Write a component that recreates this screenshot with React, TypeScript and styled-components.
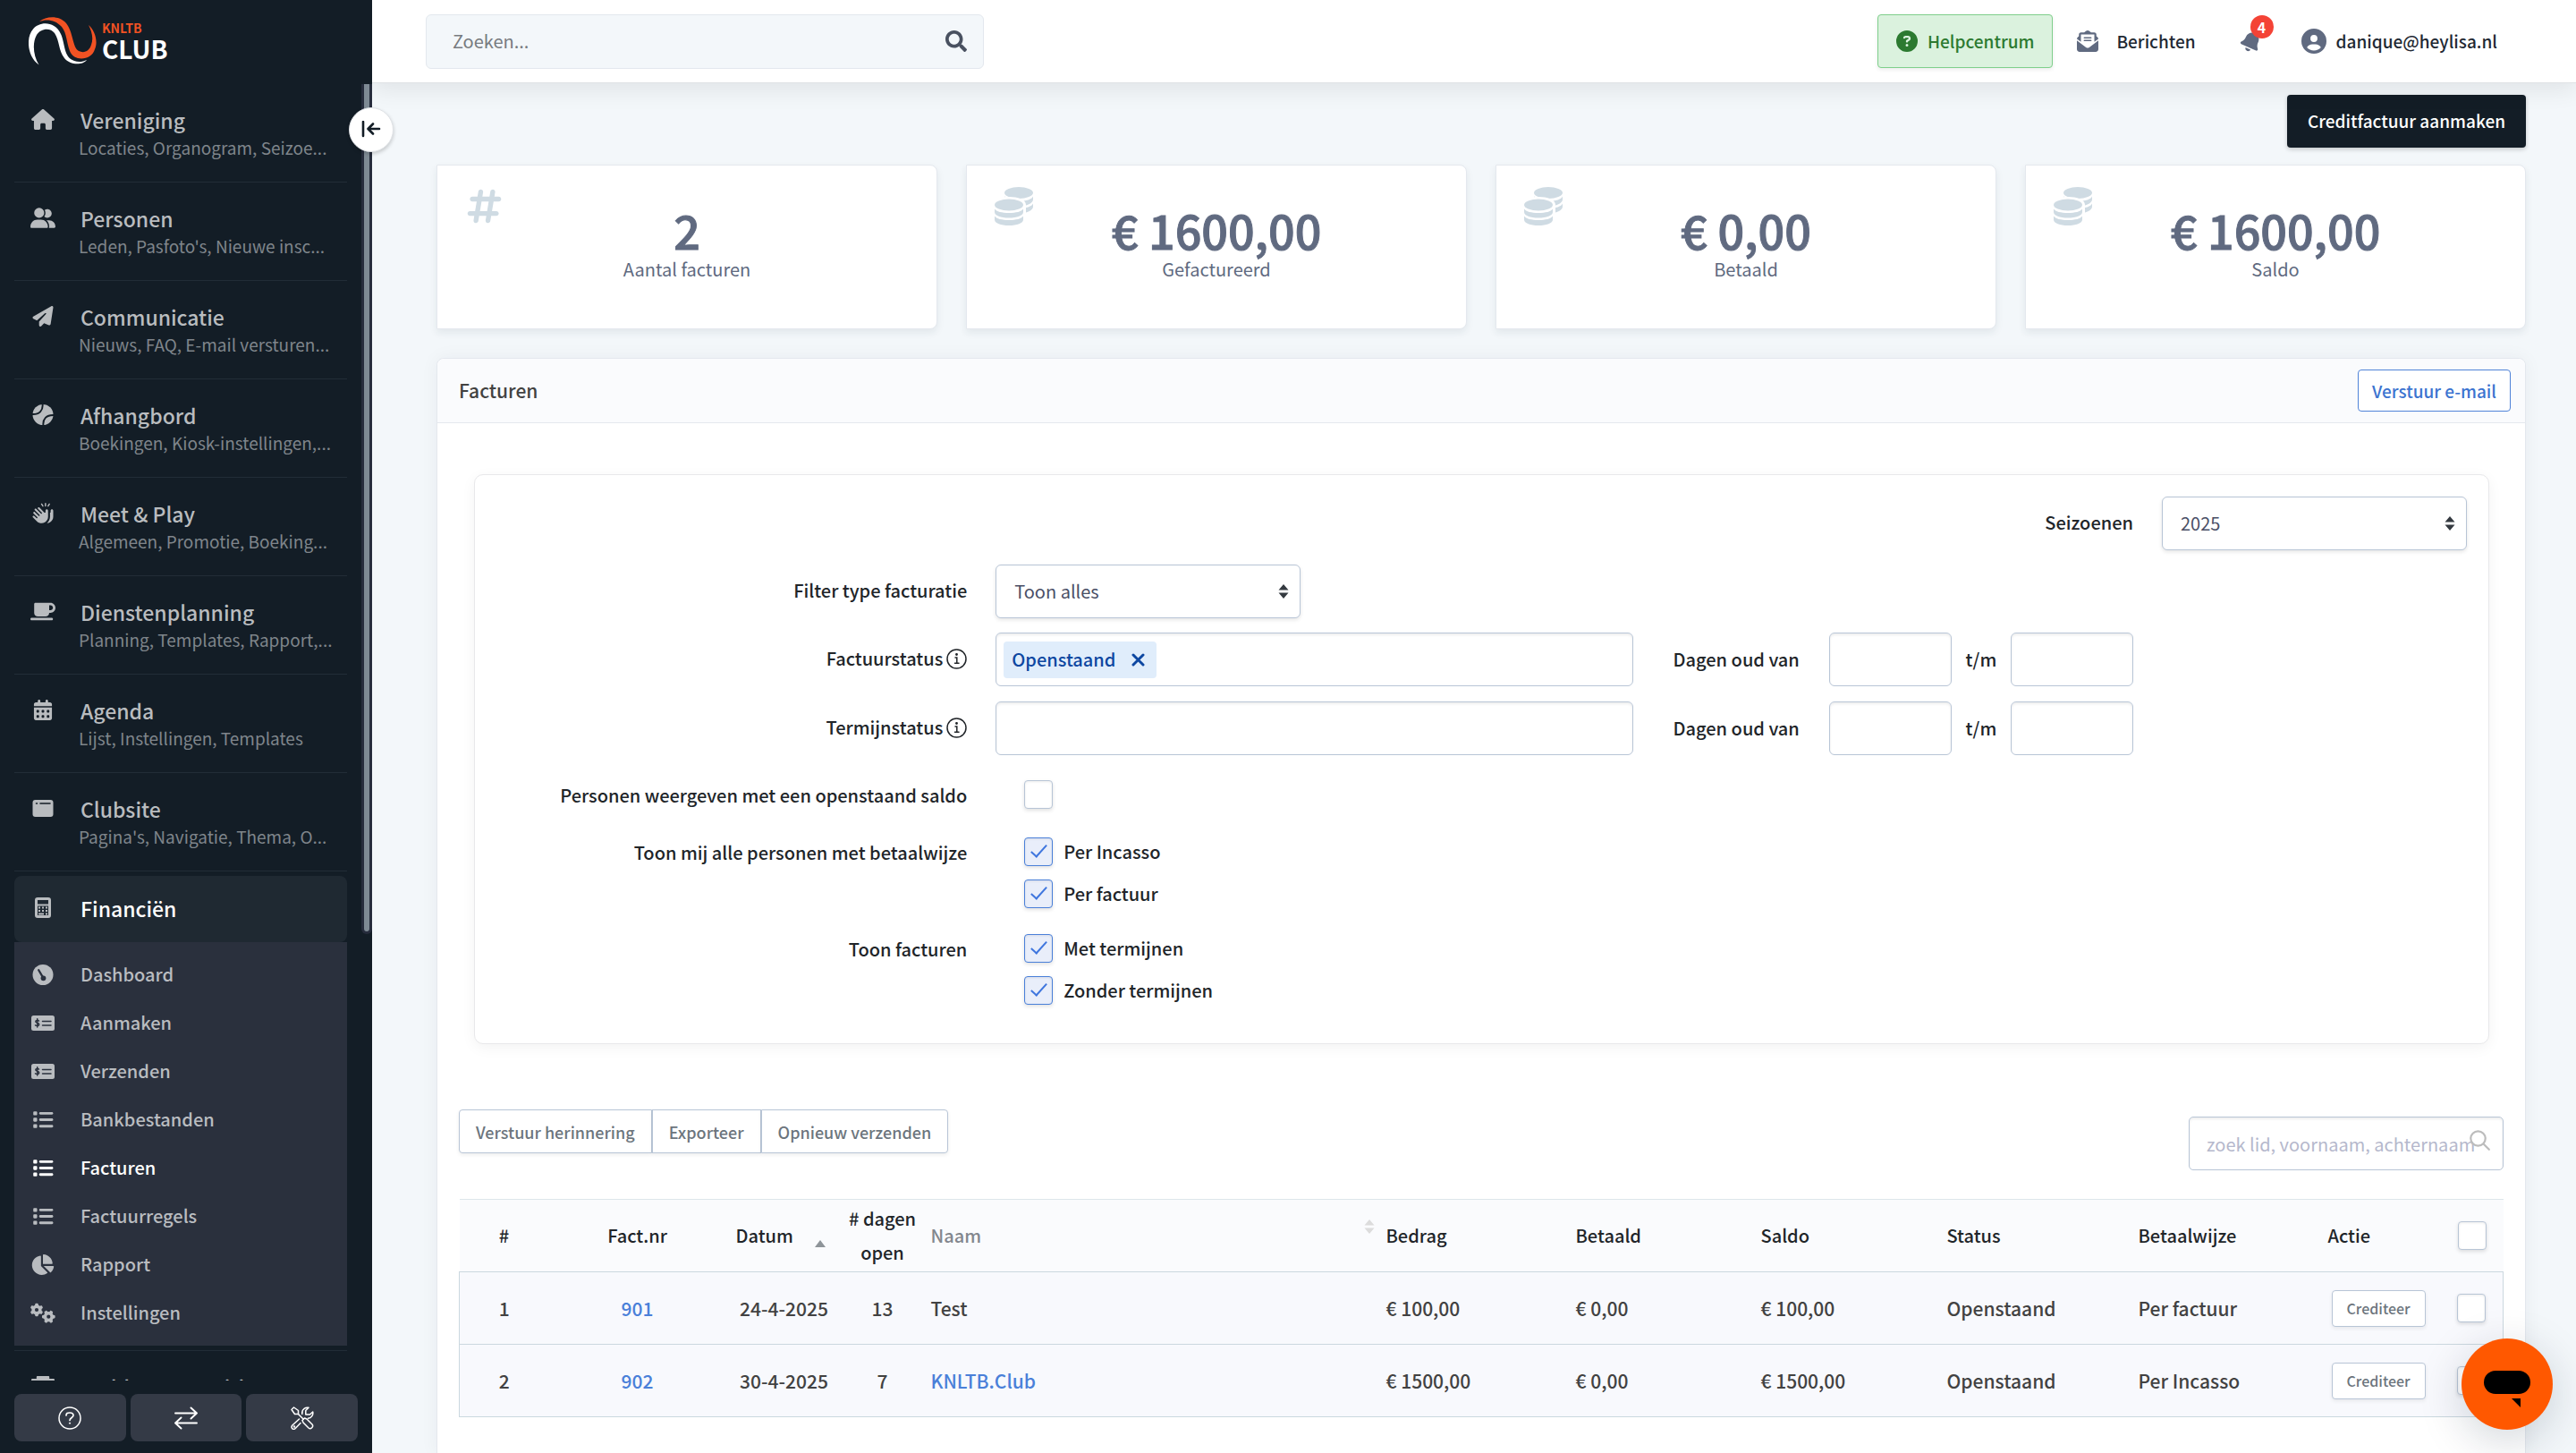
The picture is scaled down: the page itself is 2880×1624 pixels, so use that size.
import React from "react";
import styled, { createGlobalStyle, css } from "styled-components";
import {
  FaHouse,
  FaUserGroup,
  FaPaperPlane,
  FaHandsClapping,
  FaMugSaucer,
  FaCalendarDays,
  FaGears,
  FaList,
  FaCircleQuestion,
  FaEnvelopeOpenText,
  FaBell,
  FaCircleUser,
  FaHashtag,
} from "react-icons/fa6";
import { FaChartPie, FaSearch, FaTrophy } from "react-icons/fa";

/* ---------- theme ---------- */

const color = {
  navy: "#131d26",
  navyRaised: "#1f2932",
  navyLine: "#222d37",
  submenu: "#2a303d",
  page: "#f3f7fa",
  border: "#e4e8ee",
  field: "#b8c5d6",
  ink: "#212529",
  text: "#424242",
  slate: "#606a80",
  blue: "#4a80d9",
};

const semi = 500;

const GlobalStyle = createGlobalStyle`
  *, *::before, *::after { box-sizing: border-box; }
  html, body, #root { height: 100%; }
  body {
    margin: 0;
    overflow: hidden;
    background: ${color.page};
    color: ${color.ink};
    font-family: "Noto Sans CJK JP", "Noto Sans", sans-serif;
    font-size: 20px;
    line-height: 32px;
  }
  button, input, select { font: inherit; color: inherit; margin: 0; }
  button { cursor: pointer; }
  a { color: inherit; text-decoration: none; }
`;

/* ---------- custom drawings ---------- */

const Logo = () => (
  <svg width="76" height="54" viewBox="0 0 76 54" fill="none">
    <path
      d="M11.5 53.5C-2 44 -3 22 5 13.5C12 5 29 4 36 19C41 30 39 45 51 49C56 51 61 50 65 48C61 54 46 54 40 46C33 37 35 27 29 18C24 11 13 13 9 20C4 29 5 43 11.5 53.5Z"
      fill="#fff"
    />
    <path
      d="M12 5C20 -1 34 -2 42 7C50 17 49 34 56 38C62 41 68 38 70 31C73 23 70 15 67 9C74 15 78 27 74 36C71 48 51 51 46 38C42 27 43 19 37 11C30 3 20 2 12 5Z"
      fill="#f15223"
    />
  </svg>
);

const TennisIcon = () => (
  <svg viewBox="0 0 24 24">
    <circle cx="12" cy="12" r="12" fill="currentColor" />
    <path
      d="M11.500 -1C12.500 7 8 12 -1 11.500M25 12.500C16 12 11.500 17 12.500 25"
      fill="none"
      stroke={color.navy}
      strokeWidth="2"
    />
  </svg>
);

const BrowserIcon = () => (
  <svg viewBox="-2.500 -2 28 23">
    <rect width="23" height="19" rx="3" fill="currentColor" />
    <path d="M4 4h1M8.500 4h11" stroke={color.navy} strokeWidth="1.600" strokeLinecap="round" />
  </svg>
);

const CalcIcon = () => (
  <svg viewBox="0 0 18 23">
    <rect x="1.500" y="1.500" width="15" height="20" rx="1.500" fill="none" stroke="currentColor" strokeWidth="3" />
    <path d="M2 8.500h14" stroke="currentColor" strokeWidth="2" />
    <g fill="currentColor">
      <rect x="4" y="10.500" width="2" height="2" />
      <rect x="8" y="10.500" width="2" height="2" />
      <rect x="12" y="10.500" width="2" height="2" />
      <rect x="4" y="14" width="2" height="2" />
      <rect x="8" y="14" width="2" height="2" />
      <rect x="12" y="14" width="2" height="2" />
      <rect x="4" y="17.500" width="6" height="2" />
      <rect x="12" y="17.500" width="2" height="2" />
    </g>
  </svg>
);

const GaugeIcon = () => (
  <svg viewBox="0 0 24 24">
    <circle cx="12" cy="12" r="12" fill="currentColor" />
    <path d="M7 6.500L12 15" stroke={color.submenu} strokeWidth="2.400" strokeLinecap="round" />
    <circle cx="12.500" cy="16" r="3" fill={color.submenu} />
  </svg>
);

const MoneyIcon = () => (
  <svg viewBox="-1 -3 28 23">
    <rect width="26" height="17" rx="2.500" fill="currentColor" />
    <g stroke={color.submenu} fill="none" strokeLinecap="round">
      <path d="M8.500 6C7 5 4.800 5.200 4.800 6.700C4.800 8.600 8.700 8 8.700 10C8.700 11.600 6.200 11.900 4.500 10.800M6.700 3.800V13" strokeWidth="1.500" />
      <path d="M12.500 6.500h9.500M12.500 11h9.500" strokeWidth="1.500" />
    </g>
  </svg>
);

const CoinsIcon = () => (
  <svg width="43" height="43" viewBox="0 0 43 43">
    <g fill="currentColor">
      <ellipse cx="27" cy="6.500" rx="16" ry="6.500" />
      <path d="M11 10C12 13.500 19 16 27 16S42 13.500 43 10.500V14C43 18 36 21.500 27 21.500S11 18 11 14Z" />
      <path d="M11 18C12 21.500 19 24 27 24S42 21.500 43 18.500V22C43 26 36 29.500 27 29.500S11 26 11 22Z" />
    </g>
    <path d="M-2 20C-2 14 6 11 16 11S35 14 35 20V45H-2Z" fill="#fff" />
    <g fill="currentColor">
      <ellipse cx="16" cy="20" rx="16" ry="6.500" />
      <path d="M0 24.500C2 27.500 8 29 16 29S30 27.500 32 24.500V28C32 32 25 34.500 16 34.500S0 32 0 28Z" />
      <path d="M0 32.500C2 35.500 8 37 16 37S30 35.500 32 32.500V36.500C32 40.500 25 43 16 43S0 40.500 0 36.500Z" />
    </g>
  </svg>
);

const HelpIcon = () => (
  <svg width="26" height="26" viewBox="0 0 26 26" fill="none" stroke="#fff" strokeLinecap="round">
    <circle cx="13" cy="13" r="12" strokeWidth="1.500" />
    <path d="M9 10C9 7.500 10.500 7 13 7C15.500 7 17 8 17 10C17 12.500 13 12.500 13 15.500" strokeWidth="1.700" />
    <circle cx="13" cy="18.700" r="0.600" fill="#fff" />
  </svg>
);

const SwapIcon = () => (
  <svg width="26" height="26" viewBox="0 0 26 26" fill="none" stroke="#fff" strokeWidth="1.900" strokeLinecap="round" strokeLinejoin="round">
    <path d="M1 7.500h24M18.500 1.500l6.500 6l-6.500 6" />
    <path d="M25 18.500H1M7.500 12.500l-6.500 6l6.500 6" />
  </svg>
);

const ToolsIcon = () => (
  <svg width="26" height="26" viewBox="0 0 26 26" fill="none" stroke="#fff" strokeWidth="1.500" strokeLinecap="round" strokeLinejoin="round">
    <path d="M1 3.500L3.500 1L8.500 4.500V8.500H4.500Z" />
    <path d="M8.500 8.500L14 14" />
    <path d="M13 15.500L15.500 13L18 14L24 20C26 22.500 22.500 26 20 24L14 18Z" />
    <path d="M12.800 6.500C13 3 16.500 0.500 20 1.300L16.800 4.500V9H21.500L24.700 6C25.500 9.500 23 13 19.500 13.200" />
    <path d="M12.800 6.500V8.500M9.500 14L1.900 21C-0.500 24 3 27 5.200 24.500L11 18.500" />
    <circle cx="4" cy="22.500" r="0.500" />
  </svg>
);

const CollapseIcon = () => (
  <svg width="22" height="20" viewBox="0 0 22 20" fill="none" stroke={color.navy} strokeWidth="2.600" strokeLinecap="round" strokeLinejoin="round">
    <path d="M2 1v16M20 9H8M13 3.500L7.500 9L13 14.500" />
  </svg>
);

const InfoIcon = () => (
  <svg width="23" height="23" viewBox="0 0 23 23" fill="none" stroke={color.ink} strokeWidth="1.500" strokeLinecap="round">
    <circle cx="11.500" cy="11.500" r="10.500" />
    <path d="M10 10h1.800v6M9.500 16.200h4.500" />
    <circle cx="11.500" cy="6.500" r="0.700" fill={color.ink} />
  </svg>
);

const CrossIcon = () => (
  <svg width="15" height="15" viewBox="0 0 15 15" fill="none" stroke="currentColor" strokeWidth="3" strokeLinecap="round">
    <path d="M2 2l11 11M13 2L2 13" />
  </svg>
);

const CaretsIcon = () => (
  <svg width="12" height="16" viewBox="0 0 12 16" fill="currentColor">
    <path d="M6 0l5.500 6.500h-11zM6 16l5.500-6.500h-11z" />
  </svg>
);

const SortUpIcon = () => (
  <svg width="12" height="8" viewBox="0 0 12 8" fill="#8e9499">
    <path d="M6 0l6 8H0z" />
  </svg>
);

const SearchThinIcon = () => (
  <svg width="23" height="23" viewBox="0 0 23 23" fill="none" stroke="#bcbcbc" strokeWidth="2.200" strokeLinecap="round">
    <circle cx="9.500" cy="9.500" r="8.200" />
    <path d="M15.500 15.500l6.300 6.300" />
  </svg>
);

const ChatIcon = () => (
  <svg width="52" height="42" viewBox="0 0 52 42">
    <rect width="52" height="26" rx="13" fill="#000" />
    <path d="M31 31h10v10z" fill="#000" />
  </svg>
);

/* ---------- shell ---------- */

const Shell = styled.div`
  display: grid;
  grid-template-columns: 416px minmax(0, 1fr);
  height: 100vh;
`;

const Sidebar = styled.aside`
  position: relative;
  z-index: 3;
  display: flex;
  flex-direction: column;
  min-height: 0;
  background: ${color.navy};
`;

const Brand = styled.a`
  display: flex;
  align-items: center;
  gap: 6px;
  height: 94px;
  padding: 0 32px 3px;
  flex: none;
`;

const BrandText = styled.span`
  display: flex;
  flex-direction: column;
  color: #fff;
  font-weight: 700;
  font-size: 28px;
  line-height: 30px;
`;

const BrandTop = styled.span`
  color: #f15223;
  font-size: 14px;
  line-height: 16px;
`;

const NavScroll = styled.nav`
  flex: 1;
  min-height: 0;
  overflow: hidden;
  padding: 0 28px 0 16px;
`;

const ScrollThumb = styled.div`
  position: absolute;
  top: 94px;
  right: 0;
  width: 12px;
  height: 950px;
  border: 3px solid #262c3c;
  border-top: 0;
  border-radius: 0 0 6px 6px;
  background: #7e8a94;
`;

const CollapseButton = styled.button`
  position: absolute;
  top: 120px;
  right: -24px;
  display: grid;
  place-items: center;
  width: 50px;
  height: 50px;
  padding: 0;
  border: 1px solid #dfe2e6;
  border-radius: 50%;
  background: #fff;
  box-shadow: 0 2px 4px rgba(0, 0, 0, 0.2);
`;

const NavItem = styled.a<{ $active?: boolean }>`
  display: grid;
  grid-template-columns: 32px minmax(0, 1fr);
  column-gap: 24px;
  align-content: center;
  padding: 0 8px 0 16px;
  color: #b9bcbf;
  ${(p) =>
    p.$active
      ? css`
          height: 74px;
          margin-top: 5px;
          padding-bottom: 3px;
          border-radius: 8px;
          background: ${color.navyRaised};
        `
      : css`
          height: 110px;
          border-bottom: 1px solid ${color.navyLine};
        `}
`;

const NavIcon = styled.span`
  display: grid;
  place-items: center;
  svg {
    display: block;
    width: 28px;
    height: 23px;
  }
`;

const NavTitle = styled.span<{ $active?: boolean }>`
  padding-left: 2px;
  font-size: 23px;
  line-height: 32px;
  font-weight: ${semi};
  color: ${(p) => (p.$active ? "#fff" : "#b9bcbf")};
`;

const NavHint = styled.span`
  grid-column: 2;
  white-space: nowrap;
  font-size: 19px;
  line-height: 30px;
  color: #7f858b;
`;

const SubMenu = styled.div`
  padding: 9px 0 10px;
  background: ${color.submenu};
`;

const SubItem = styled.a<{ $active?: boolean }>`
  display: grid;
  grid-template-columns: 32px minmax(0, 1fr);
  column-gap: 26px;
  align-items: center;
  height: 54px;
  padding: 0 16px;
  font-size: 20px;
  font-weight: ${semi};
  color: ${(p) => (p.$active ? "#fff" : "#b9bcc0")};
`;

const NavRule = styled.hr`
  margin: 5px 0 0;
  border: 0;
  border-top: 1px solid ${color.navyLine};
`;

const SideFooter = styled.div`
  flex: none;
  display: flex;
  gap: 5px;
  padding: 15px 16px 13px;
  background: ${color.navy};
`;

const SideButton = styled.button`
  flex: 1;
  display: grid;
  place-items: center;
  height: 53px;
  padding: 0;
  border: 0;
  border-radius: 8px;
  background: #343a46;
`;

const Main = styled.div`
  display: flex;
  flex-direction: column;
  min-width: 0;
  min-height: 0;
`;

/* ---------- top bar ---------- */

const TopBar = styled.header`
  position: relative;
  z-index: 2;
  flex: none;
  display: flex;
  align-items: center;
  justify-content: space-between;
  height: 93px;
  padding: 0 88px 0 60px;
  border-bottom: 1px solid #dfe2e5;
  background: #fff;
  box-shadow: 0 8px 24px rgba(0, 0, 0, 0.08);
`;

const SearchBox = styled.label`
  display: flex;
  align-items: center;
  width: 624px;
  height: 61px;
  padding: 0 18px 0 29px;
  border: 1px solid #e3e8ee;
  border-radius: 6px;
  background: ${color.page};
  color: #495160;
`;

const SearchInput = styled.input`
  flex: 1;
  min-width: 0;
  padding: 0;
  border: 0;
  outline: 0;
  background: transparent;
  font-size: 20px;
  &::placeholder {
    color: #777b80;
    opacity: 1;
  }
`;

const TopActions = styled.div`
  display: flex;
  align-items: center;
`;

const HelpButton = styled.button`
  display: flex;
  align-items: center;
  gap: 11px;
  height: 60px;
  margin-right: 27px;
  padding: 0 20px;
  border: 1px solid #7fcf8b;
  border-radius: 4px;
  background: #dbf2de;
  box-shadow: 0 2px 4px rgba(0, 0, 0, 0.08);
  color: #2c7a30;
  font-size: 19px;
  font-weight: ${semi};
`;

const TopLink = styled.a<{ $gap: number; $after: number }>`
  position: relative;
  display: flex;
  align-items: center;
  gap: ${(p) => p.$gap}px;
  margin-right: ${(p) => p.$after}px;
  font-size: 19px;
  font-weight: ${semi};
  color: #1f2933;
  svg {
    color: ${color.slate};
  }
`;

const TiltedBell = styled(FaBell)`
  transform: rotate(24deg);
`;

const Badge = styled.span`
  position: absolute;
  top: -17px;
  right: -13px;
  display: grid;
  place-items: center;
  width: 26px;
  height: 26px;
  border-radius: 50%;
  background: #f44336;
  color: #fff;
  font-size: 16px;
  line-height: 26px;
  font-weight: 700;
`;

/* ---------- page ---------- */

const Page = styled.main`
  flex: 1;
  min-height: 0;
  display: flex;
  flex-direction: column;
  padding: 13px 56px 0 72px;
`;

const PrimaryButton = styled.button`
  align-self: flex-end;
  height: 59px;
  flex: none;
  padding: 0 23px 2px;
  border: 0;
  border-radius: 4px;
  background: ${color.navy};
  box-shadow: 0 2px 5px rgba(0, 0, 0, 0.2);
  color: #fff;
  font-size: 19px;
  font-weight: ${semi};
`;

const Stats = styled.section`
  display: grid;
  grid-template-columns: repeat(4, minmax(0, 1fr));
  gap: 32px;
  flex: none;
  margin-top: 19px;
`;

const StatCard = styled.article`
  position: relative;
  display: flex;
  flex-direction: column;
  align-items: center;
  height: 184px;
  padding-top: 42px;
  border: 1px solid ${color.border};
  border-radius: 0 8px 8px 0;
  background: #fff;
  box-shadow: 0 4px 8px rgba(30, 45, 60, 0.08);
  color: ${color.slate};
`;

const StatIcon = styled.span`
  position: absolute;
  top: 24px;
  left: 31px;
  color: #cfdbe3;
  svg {
    display: block;
  }
`;

const StatValue = styled.strong`
  font-size: 52px;
  line-height: 60px;
  font-weight: ${semi};
  -webkit-text-stroke: 1px currentColor;
`;

const StatLabel = styled.span`
  font-size: 20px;
  line-height: 28px;
`;

const Panel = styled.section`
  flex: 1 0 auto;
  margin-top: 32px;
  border: 1px solid ${color.border};
  border-radius: 8px 8px 0 0;
  background: #fff;
  box-shadow: 0 0 20px rgba(30, 45, 60, 0.05);
`;

const PanelHead = styled.header`
  display: flex;
  align-items: center;
  justify-content: space-between;
  height: 72px;
  padding: 0 16px 0 24px;
  border-bottom: 1px solid ${color.border};
  border-radius: 8px 8px 0 0;
  background: #fafbfd;
`;

const PanelTitle = styled.h2`
  margin: 0;
  padding-bottom: 2px;
  font-size: 21px;
  font-weight: ${semi};
  color: ${color.text};
`;

const OutlineButton = styled.button`
  height: 47px;
  padding: 0 15px;
  border: 1px solid #5083d8;
  border-radius: 4px;
  background: #fff;
  color: #3c74d0;
  font-size: 19px;
  font-weight: ${semi};
`;

/* ---------- filters ---------- */

const Filters = styled.form`
  display: flex;
  flex-direction: column;
  margin: 57px 40px 0 41px;
  padding: 24px 24px 43px 0;
  border: 1px solid #e8e8ea;
  border-radius: 10px;
  background: #fff;
  box-shadow: 0 4px 16px rgba(0, 0, 0, 0.05);
  font-weight: ${semi};
`;

const SeasonRow = styled.div`
  display: flex;
  align-items: center;
  justify-content: flex-end;
  gap: 32px;
  margin-bottom: 16px;
`;

const SeasonLabel = styled.label`
  padding-bottom: 3px;
`;

const FilterGrid = styled.div`
  display: grid;
  grid-template-columns: 550fr 712fr 900fr;
  column-gap: 32px;
`;

const FilterLabel = styled.span<{ $tall?: boolean }>`
  grid-column: 1;
  display: flex;
  align-items: center;
  justify-content: flex-end;
  gap: 4px;
  height: ${(p) => (p.$tall ? 58 : 34)}px;
  text-align: right;
`;

const FilterField = styled.div`
  grid-column: 2;
`;

const RowSpace = styled.div<{ $h: number }>`
  grid-column: 1 / -1;
  height: ${(p) => p.$h}px;
`;

const SelectWrap = styled.span`
  position: relative;
  display: block;
  width: 341px;
  color: #343a40;
  svg {
    position: absolute;
    right: 13px;
    top: 22px;
    pointer-events: none;
  }
`;

const Select = styled.select`
  appearance: none;
  width: 100%;
  height: 60px;
  padding: 0 32px 0 20px;
  border: 1px solid ${color.field};
  border-radius: 6px;
  background: #fff;
  box-shadow: 0 2px 4px rgba(0, 0, 0, 0.1);
  color: #4a4f66;
  font-size: 20px;
  font-weight: 400;
`;

const TagField = styled.div`
  display: flex;
  align-items: center;
  gap: 8px;
  height: 60px;
  padding: 0 8px;
  border: 1px solid ${color.field};
  border-radius: 6px;
  background: #fff;
  box-shadow: inset 0 2px 3px rgba(0, 0, 0, 0.07);
`;

const Tag = styled.span`
  display: flex;
  align-items: center;
  gap: 18px;
  height: 41px;
  padding: 0 13px 0 9px;
  border-radius: 4px;
  background: #e0edfb;
  color: #0d47a1;
`;

const TagRemove = styled.button`
  display: flex;
  padding: 0;
  border: 0;
  background: transparent;
`;

const TagInput = styled.input`
  flex: 1;
  min-width: 0;
  border: 0;
  outline: 0;
  background: transparent;
`;

const Days = styled.div`
  grid-column: 3;
  display: flex;
  align-items: center;
  gap: 16px;
  padding-left: 13px;
`;

const DaysLabel = styled.label`
  width: 158px;
`;

const DaysInput = styled.input`
  width: 137px;
  height: 60px;
  padding: 0 16px;
  border: 1px solid ${color.field};
  border-radius: 6px;
  background: #fff;
  box-shadow: inset 0 2px 3px rgba(0, 0, 0, 0.07);
`;

const CheckStack = styled.div`
  grid-column: 2;
  display: flex;
  flex-direction: column;
  gap: 15px;
  padding-left: 32px;
`;

const CheckLabel = styled.label`
  display: flex;
  align-items: center;
  gap: 12px;
  height: 32px;
`;

const CheckInput = styled.input.attrs({ type: "checkbox" })`
  appearance: none;
  display: grid;
  place-items: center;
  width: 32px;
  height: 32px;
  border: 1px solid ${color.field};
  border-radius: 4px;
  background: #fff;
  box-shadow: 0 2px 4px rgba(0, 0, 0, 0.12), inset 0 1px 3px rgba(0, 0, 0, 0.08);
  &:checked {
    border-color: #4a80d9;
    background: #e9eefa;
  }
  &:checked::after {
    content: "";
    width: 9px;
    height: 18px;
    margin-bottom: 6px;
    border: solid #3f76de;
    border-width: 0 2px 2px 0;
    transform: rotate(42deg);
  }
`;

/* ---------- table ---------- */

const Tools = styled.div`
  display: flex;
  justify-content: space-between;
  align-items: flex-start;
  margin: 73px 24px 0;
`;

const ButtonGroup = styled.div`
  display: flex;
`;

const GroupButton = styled.button`
  height: 49px;
  padding: 0 18px;
  border: 1px solid ${color.field};
  background: #fff;
  box-shadow: 0 2px 4px rgba(0, 0, 0, 0.07);
  color: #6c757d;
  font-size: 18px;
  font-weight: ${semi};
  &:first-child { border-radius: 4px 0 0 4px; }
  &:last-child { border-radius: 0 4px 4px 0; }
`;

const TableSearch = styled.label`
  position: relative;
  display: block;
  margin-top: 8px;
  svg {
    position: absolute;
    top: 15px;
    right: 15px;
  }
`;

const TableSearchInput = styled.input`
  display: block;
  width: 352px;
  height: 60px;
  padding: 0 16px 0 19px;
  border: 1px solid ${color.field};
  border-radius: 5px;
  background: #fff;
  box-shadow: inset 0 2px 3px rgba(0, 0, 0, 0.07);
  font-size: 20px;
  &::placeholder {
    color: #b5b8cc;
    opacity: 1;
  }
`;

const Table = styled.table`
  width: calc(100% - 48px);
  margin: 32px 24px 40px;
  border-collapse: collapse;
  table-layout: fixed;
  font-weight: ${semi};
`;

const Col = styled.col<{ $w?: number }>`
  width: ${(p) => (p.$w ? `${p.$w}px` : "auto")};
`;

const Th = styled.th<{ $center?: boolean; $muted?: boolean }>`
  height: 81px;
  padding: ${(p) => (p.$center ? "0" : "0 9px")};
  border-top: 1px solid #dde6ea;
  background: #fafbfd;
  text-align: ${(p) => (p.$center ? "center" : "left")};
  font-weight: ${semi};
  font-size: 20px;
  line-height: 38px;
  color: ${(p) => (p.$muted ? "#83878e" : color.ink)};
`;

const ThInner = styled.span<{ $push?: boolean }>`
  display: flex;
  align-items: center;
  justify-content: ${(p) => (p.$push ? "space-between" : "flex-start")};
  gap: 24px;
  margin-right: -5px;
  padding-left: ${(p) => (p.$push ? 0 : 2)}px;
`;

const SortMark = styled.span<{ $shift: number }>`
  display: flex;
  color: #dcdcdc;
  padding: ${(p) => (p.$shift > 0 ? `${p.$shift}px 0 0` : `0 0 ${-p.$shift}px`)};
`;

const Tr = styled.tr`
  border: 1px solid #cbd8df;
  background: #f8f9fd;
`;

const Td = styled.td<{ $center?: boolean }>`
  height: 81px;
  padding: ${(p) => (p.$center ? "0" : "0 9px")};
  text-align: ${(p) => (p.$center ? "center" : "left")};
  font-size: 21px;
  color: ${color.text};
`;

const BlueLink = styled.a`
  color: ${color.blue};
`;

const SmallButton = styled.button`
  display: block;
  height: 41px;
  margin-left: 4px;
  padding: 0 16px;
  border: 1px solid ${color.field};
  border-radius: 4px;
  background: #fff;
  box-shadow: 0 2px 4px rgba(0, 0, 0, 0.07);
  color: #6c757d;
  font-size: 16px;
  font-weight: ${semi};
`;

const CellCheck = styled(CheckInput)`
  margin: 0 auto;
`;

const ChatButton = styled.button`
  position: fixed;
  right: 26px;
  bottom: 26px;
  z-index: 5;
  display: grid;
  place-items: center;
  width: 102px;
  height: 102px;
  padding: 12px 0 0;
  border: 0;
  border-radius: 50%;
  background: #ff5800;
  box-shadow: 0 12px 50px rgba(0, 30, 50, 0.18);
`;

/* ---------- data ---------- */

const nav = [
  { title: "Vereniging", hint: "Locaties, Organogram, Seizoe...", icon: <FaHouse /> },
  { title: "Personen", hint: "Leden, Pasfoto's, Nieuwe insc...", icon: <FaUserGroup /> },
  { title: "Communicatie", hint: "Nieuws, FAQ, E-mail versturen...", icon: <FaPaperPlane /> },
  { title: "Afhangbord", hint: "Boekingen, Kiosk-instellingen,...", icon: <TennisIcon /> },
  { title: "Meet & Play", hint: "Algemeen, Promotie, Boeking...", icon: <FaHandsClapping /> },
  { title: "Dienstenplanning", hint: "Planning, Templates, Rapport,...", icon: <FaMugSaucer /> },
  { title: "Agenda", hint: "Lijst, Instellingen, Templates", icon: <FaCalendarDays /> },
  { title: "Clubsite", hint: "Pagina's, Navigatie, Thema, O...", icon: <BrowserIcon /> },
];

const finance = [
  { title: "Dashboard", icon: <GaugeIcon /> },
  { title: "Aanmaken", icon: <MoneyIcon /> },
  { title: "Verzenden", icon: <MoneyIcon /> },
  { title: "Bankbestanden", icon: <FaList /> },
  { title: "Facturen", icon: <FaList />, active: true },
  { title: "Factuurregels", icon: <FaList /> },
  { title: "Rapport", icon: <FaChartPie /> },
  { title: "Instellingen", icon: <FaGears /> },
];

const stats = [
  { value: "2", label: "Aantal facturen", icon: <FaHashtag size={43} /> },
  { value: "€ 1600,00", label: "Gefactureerd", icon: <CoinsIcon /> },
  { value: "€ 0,00", label: "Betaald", icon: <CoinsIcon /> },
  { value: "€ 1600,00", label: "Saldo", icon: <CoinsIcon /> },
];

const invoices = [
  { n: 1, nr: "901", date: "24-4-2025", days: 13, name: "Test", link: false, amount: "€ 100,00", paid: "€ 0,00", saldo: "€ 100,00", method: "Per factuur" },
  { n: 2, nr: "902", date: "30-4-2025", days: 7, name: "KNLTB.Club", link: true, amount: "€ 1500,00", paid: "€ 0,00", saldo: "€ 1500,00", method: "Per Incasso" },
];

const columns = [100, 198, 130, 90, undefined, 212, 207, 208, 214, 212, 135, 70];

const DaysRange = ({ id }: { id: string }) => (
  <Days>
    <DaysLabel htmlFor={`${id}-from`}>Dagen oud van</DaysLabel>
    <DaysInput id={`${id}-from`} />
    <label htmlFor={`${id}-to`}>t/m</label>
    <DaysInput id={`${id}-to`} />
  </Days>
);

export default function App() {
  return (
    <Shell>
      <GlobalStyle />
      <Sidebar>
        <Brand href="#">
          <Logo />
          <BrandText>
            <BrandTop>KNLTB</BrandTop>
            <span>CLUB</span>
          </BrandText>
        </Brand>
        <NavScroll>
          {nav.map((item) => (
            <NavItem key={item.title} href="#">
              <NavIcon>{item.icon}</NavIcon>
              <NavTitle>{item.title}</NavTitle>
              <NavHint>{item.hint}</NavHint>
            </NavItem>
          ))}
          <NavItem href="#" $active>
            <NavIcon>
              <CalcIcon />
            </NavIcon>
            <NavTitle $active>Financiën</NavTitle>
          </NavItem>
          <SubMenu>
            {finance.map((item) => (
              <SubItem key={item.title} href="#" $active={item.active}>
                <NavIcon>{item.icon}</NavIcon>
                {item.title}
              </SubItem>
            ))}
          </SubMenu>
          <NavRule />
          <NavItem href="#">
            <NavIcon>
              <FaTrophy />
            </NavIcon>
            <NavTitle>Laddercompetitie</NavTitle>
            <NavHint>Instellingen</NavHint>
          </NavItem>
        </NavScroll>
        <SideFooter>
          <SideButton aria-label="Help">
            <HelpIcon />
          </SideButton>
          <SideButton aria-label="Wisselen">
            <SwapIcon />
          </SideButton>
          <SideButton aria-label="Beheer">
            <ToolsIcon />
          </SideButton>
        </SideFooter>
        <ScrollThumb />
        <CollapseButton aria-label="Menu inklappen">
          <CollapseIcon />
        </CollapseButton>
      </Sidebar>

      <Main>
        <TopBar>
          <SearchBox>
            <SearchInput placeholder="Zoeken..." aria-label="Zoeken" />
            <FaSearch size={24} />
          </SearchBox>
          <TopActions>
            <HelpButton>
              <FaCircleQuestion size={24} />
              Helpcentrum
            </HelpButton>
            <TopLink href="#" $gap={20} $after={50}>
              <FaEnvelopeOpenText size={24} />
              Berichten
            </TopLink>
            <TopLink href="#" $gap={0} $after={44} aria-label="Meldingen">
              <TiltedBell size={24} />
              <Badge>4</Badge>
            </TopLink>
            <TopLink href="#" $gap={11} $after={0}>
              <FaCircleUser size={28} />
              danique@heylisa.nl
            </TopLink>
          </TopActions>
        </TopBar>

        <Page>
          <PrimaryButton>Creditfactuur aanmaken</PrimaryButton>
          <Stats>
            {stats.map((s) => (
              <StatCard key={s.label}>
                <StatIcon>{s.icon}</StatIcon>
                <StatValue>{s.value}</StatValue>
                <StatLabel>{s.label}</StatLabel>
              </StatCard>
            ))}
          </Stats>

          <Panel>
            <PanelHead>
              <PanelTitle>Facturen</PanelTitle>
              <OutlineButton>Verstuur e-mail</OutlineButton>
            </PanelHead>

            <Filters>
              <SeasonRow>
                <SeasonLabel htmlFor="season">Seizoenen</SeasonLabel>
                <SelectWrap>
                  <Select id="season">
                    <option>2025</option>
                  </Select>
                  <CaretsIcon />
                </SelectWrap>
              </SeasonRow>
              <FilterGrid>
                <FilterLabel $tall as="label" htmlFor="type">
                  Filter type facturatie
                </FilterLabel>
                <FilterField>
                  <SelectWrap>
                    <Select id="type">
                      <option>Toon alles</option>
                    </Select>
                    <CaretsIcon />
                  </SelectWrap>
                </FilterField>
                <RowSpace $h={16} />
                <FilterLabel $tall as="label" htmlFor="status">
                  Factuurstatus <InfoIcon />
                </FilterLabel>
                <TagField>
                  <Tag>
                    Openstaand
                    <TagRemove type="button" aria-label="Verwijder Openstaand">
                      <CrossIcon />
                    </TagRemove>
                  </Tag>
                  <TagInput id="status" />
                </TagField>
                <DaysRange id="status-days" />
                <RowSpace $h={17} />
                <FilterLabel $tall as="label" htmlFor="term">
                  Termijnstatus <InfoIcon />
                </FilterLabel>
                <TagField>
                  <TagInput id="term" />
                </TagField>
                <DaysRange id="term-days" />
                <RowSpace $h={28} />
                <FilterLabel as="label" htmlFor="open">
                  Personen weergeven met een openstaand saldo
                </FilterLabel>
                <CheckStack>
                  <CheckInput id="open" />
                </CheckStack>
                <RowSpace $h={30} />
                <FilterLabel>Toon mij alle personen met betaalwijze</FilterLabel>
                <CheckStack>
                  <CheckLabel>
                    <CheckInput defaultChecked />
                    Per Incasso
                  </CheckLabel>
                  <CheckLabel>
                    <CheckInput defaultChecked />
                    Per factuur
                  </CheckLabel>
                </CheckStack>
                <RowSpace $h={29} />
                <FilterLabel>Toon facturen</FilterLabel>
                <CheckStack>
                  <CheckLabel>
                    <CheckInput defaultChecked />
                    Met termijnen
                  </CheckLabel>
                  <CheckLabel>
                    <CheckInput defaultChecked />
                    Zonder termijnen
                  </CheckLabel>
                </CheckStack>
              </FilterGrid>
            </Filters>

            <Tools>
              <ButtonGroup>
                <GroupButton>Verstuur herinnering</GroupButton>
                <GroupButton>Exporteer</GroupButton>
                <GroupButton>Opnieuw verzenden</GroupButton>
              </ButtonGroup>
              <TableSearch>
                <TableSearchInput placeholder="zoek lid, voornaam, achternaam" aria-label="Zoek lid" />
                <SearchThinIcon />
              </TableSearch>
            </Tools>

            <Table>
              <colgroup>
                {columns.map((w, i) => (
                  <Col key={i} $w={w} />
                ))}
              </colgroup>
              <thead>
                <tr>
                  <Th $center>#</Th>
                  <Th $center>Fact.nr</Th>
                  <Th>
                    <ThInner>
                      Datum
                      <SortMark $shift={17}>
                        <SortUpIcon />
                      </SortMark>
                    </ThInner>
                  </Th>
                  <Th $center># dagen open</Th>
                  <Th $muted>
                    <ThInner $push>
                      Naam
                      <SortMark $shift={-20}>
                        <CaretsIcon />
                      </SortMark>
                    </ThInner>
                  </Th>
                  <Th>Bedrag</Th>
                  <Th>Betaald</Th>
                  <Th>Saldo</Th>
                  <Th>Status</Th>
                  <Th>Betaalwijze</Th>
                  <Th>Actie</Th>
                  <Th>
                    <CellCheck aria-label="Alles selecteren" />
                  </Th>
                </tr>
              </thead>
              <tbody>
                {invoices.map((r) => (
                  <Tr key={r.nr}>
                    <Td $center>{r.n}</Td>
                    <Td $center>
                      <BlueLink href="#">{r.nr}</BlueLink>
                    </Td>
                    <Td $center>{r.date}</Td>
                    <Td $center>{r.days}</Td>
                    <Td>{r.link ? <BlueLink href="#">{r.name}</BlueLink> : r.name}</Td>
                    <Td>{r.amount}</Td>
                    <Td>{r.paid}</Td>
                    <Td>{r.saldo}</Td>
                    <Td>Openstaand</Td>
                    <Td>{r.method}</Td>
                    <Td>
                      <SmallButton>Crediteer</SmallButton>
                    </Td>
                    <Td>
                      <CellCheck aria-label={`Selecteer ${r.nr}`} />
                    </Td>
                  </Tr>
                ))}
              </tbody>
            </Table>
          </Panel>
        </Page>
      </Main>

      <ChatButton aria-label="Chat openen">
        <ChatIcon />
      </ChatButton>
    </Shell>
  );
}
